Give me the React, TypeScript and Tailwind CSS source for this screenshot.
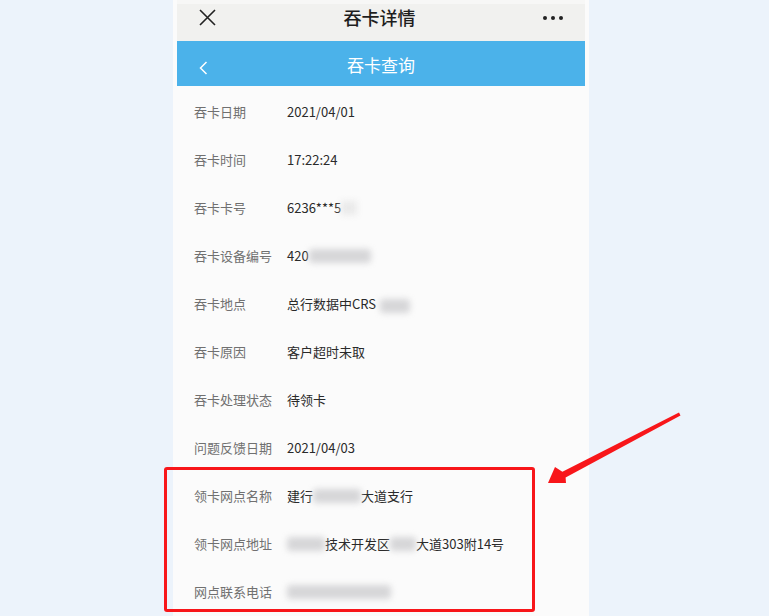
import React from 'react';

type Row = { label: string; value: React.ReactNode };

const Blur = ({ w }: { w: number }) => (
  <span
    className="inline-block h-[14px] rounded-sm bg-[#d6d6d8] blur-[3px] align-middle"
    style={{ width: w }}
  />
);

const rows: Row[] = [
  { label: '吞卡日期', value: '2021/04/01' },
  { label: '吞卡时间', value: '17:22:24' },
  {
    label: '吞卡卡号',
    value: (
      <>
        6236***5<span className="inline-block h-[14px] w-[16px] bg-[#eaeaea] blur-[3px] align-middle" />
      </>
    ),
  },
  {
    label: '吞卡设备编号',
    value: (
      <>
        420<Blur w={62} />
      </>
    ),
  },
  {
    label: '吞卡地点',
    value: (
      <>
        总行数据中CRS <span className="ml-1"><Blur w={30} /></span>
      </>
    ),
  },
  { label: '吞卡原因', value: '客户超时未取' },
  { label: '吞卡处理状态', value: '待领卡' },
  { label: '问题反馈日期', value: '2021/04/03' },
  {
    label: '领卡网点名称',
    value: (
      <>
        建行<Blur w={48} />大道支行
      </>
    ),
  },
  {
    label: '领卡网点地址',
    value: (
      <>
        <Blur w={38} />技术开发区<Blur w={26} />大道303附14号
      </>
    ),
  },
  {
    label: '网点联系电话',
    value: <Blur w={104} />,
  },
];

export default function App() {
  return (
    <div
      className="relative h-[616px] w-[769px] overflow-hidden bg-[#ecf3fb]"
      style={{ fontFamily: '"Noto Sans CJK SC", "Noto Sans", sans-serif' }}
    >
      <div className="ml-[173px] flex h-full w-[416px] flex-col bg-[#fbfbfb] px-1">
        {/* top bar */}
        <div className="flex h-[42px] items-center justify-between border-t-[4px] border-[#f7f7f6] bg-[#f1f1ef] px-[22px] pb-[10px]">
          <svg width="17" height="17" viewBox="0 0 17 17" className="text-[#222]">
            <path d="M1 1L16 16M16 1L1 16" stroke="currentColor" strokeWidth="1.6" />
          </svg>
          <span className="text-[18px] font-medium text-[#1e1e1e]">吞卡详情</span>
          <span className="flex gap-[4px]">
            <span className="h-[4px] w-[4px] rounded-full bg-[#222]" />
            <span className="h-[4px] w-[4px] rounded-full bg-[#222]" />
            <span className="h-[4px] w-[4px] rounded-full bg-[#222]" />
          </span>
        </div>
        {/* blue bar */}
        <div className="relative flex h-[50px] items-center justify-center bg-[#4bb2ea] pt-[3px]">
          <svg width="9" height="14" viewBox="0 0 9 14" className="absolute left-[22px] top-[20px] text-white">
            <path d="M7.5 1L1.5 7L7.5 13" fill="none" stroke="currentColor" strokeWidth="1.5" />
          </svg>
          <span className="text-[17px] text-white">吞卡查询</span>
        </div>
        {/* rows */}
        <div className="flex flex-col pt-[2px]">
          {rows.map((r) => (
            <div key={r.label} className="flex h-[48px] items-center pl-[17px] text-[13px]">
              <span className="w-[93px] shrink-0 text-[#707070]">{r.label}</span>
              <span className="flex items-center text-[#2a2a2a]">{r.value}</span>
            </div>
          ))}
        </div>
      </div>

      {/* annotation */}
      <div className="pointer-events-none absolute left-[164px] top-[467px] h-[145px] w-[371px] rounded-[3px] border-[3px] border-[#f8161a]" />
      <svg className="pointer-events-none absolute left-0 top-0" width="769" height="616">
        <polygon
          points="548,483 555,467 562.4,471.8 679,412.5 680.5,415.5 565.6,477.4 566,483"
          fill="#f8161a"
        />
      </svg>
    </div>
  );
}
